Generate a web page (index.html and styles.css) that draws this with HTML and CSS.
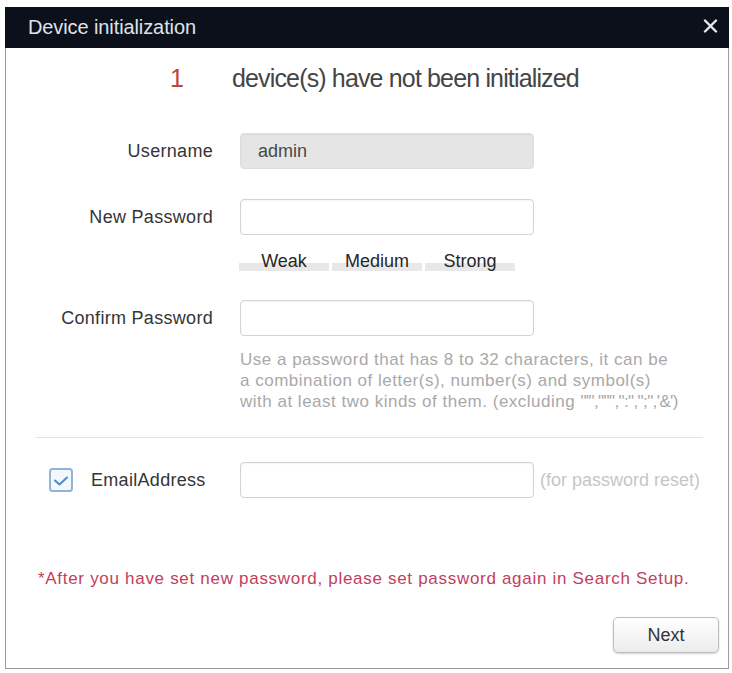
FILE: index.html
```html
<!DOCTYPE html>
<html lang="en">
<head>
<meta charset="utf-8">
<title>Device initialization</title>
<link rel="stylesheet" href="styles.css">
</head>
<body>
<div class="dialog">
  <div class="header">
    <span class="header-title">Device initialization</span>
    <span class="close" aria-label="Close">
      <svg width="15" height="14" viewBox="0 0 15 14"><path d="M2 1.5 L13 12.5 M13 1.5 L2 12.5" stroke="#e6e8ea" stroke-width="2.4" stroke-linecap="round" fill="none"/></svg>
    </span>
  </div>
  <div class="content">
    <div class="title"><span class="count">1</span>device(s) have not been initialized</div>

    <div class="row row-user">
      <label class="label">Username</label>
      <div class="input input-disabled">admin</div>
    </div>

    <div class="row row-newpw">
      <label class="label">New Password</label>
      <div class="input"></div>
    </div>

    <div class="strength">
      <div class="seg"><span class="seg-text">Weak</span><span class="seg-bar"></span></div>
      <div class="seg"><span class="seg-text">Medium</span><span class="seg-bar"></span></div>
      <div class="seg"><span class="seg-text">Strong</span><span class="seg-bar"></span></div>
    </div>

    <div class="row row-confirm">
      <label class="label">Confirm Password</label>
      <div class="input"></div>
    </div>

    <p class="hint">Use a password that has 8 to 32 characters, it can be<br>a combination of letter(s), number(s) and symbol(s)<br>with at least two kinds of them. (excluding <span class="chars">"'",""",":",";",'&amp;'</span>)</p>

    <div class="divider"></div>

    <div class="row row-email">
      <div class="label label-check">
        <span class="checkbox">
          <svg width="24" height="24" viewBox="0 0 24 24"><rect x="1" y="1" width="22" height="22" rx="2.5" fill="#f4f8fc" stroke="#93b3d4" stroke-width="2"/><path d="M6 12.5 L10.5 16.5 L18 9.5" stroke="#4d8bcc" stroke-width="2" fill="none" stroke-linecap="round" stroke-linejoin="round"/></svg>
        </span>
        <span>EmailAddress</span>
      </div>
      <div class="input"></div>
      <span class="reset-note">(for password reset)</span>
    </div>

    <p class="note">*After you have set new password, please set password again in Search Setup.</p>

    <div class="actions">
      <button class="btn" type="button">Next</button>
    </div>
  </div>
</div>
</body>
</html>
```
FILE: styles.css
```css
html, body {
  margin: 0;
  padding: 0;
  background: #ffffff;
}

body {
  font-family: "Liberation Sans", Arial, sans-serif;
  color: #333;
}

.dialog {
  box-sizing: border-box;
  margin: 7px 0 0 5px;
  width: 724px;
  height: 662px;
  border: 1px solid #9c9c9c;
  border-top: none;
  background: #fff;
  display: flex;
  flex-direction: column;
}

.header {
  height: 41px;
  margin: 0 -1px;
  background: #0c101b;
  display: flex;
  align-items: center;
  justify-content: space-between;
  padding: 0 11px 0 23px;
}

.header-title {
  color: #dfe3e8;
  font-size: 20px;
  letter-spacing: -0.1px;
}

.close {
  display: flex;
  width: 15px;
  height: 14px;
  margin-top: -3px;
}

.content {
  padding-top: 15px;
  display: flex;
  flex-direction: column;
}

.title {
  height: 30px;
  line-height: 30px;
  padding-left: 164px;
  font-size: 25px;
  letter-spacing: -0.85px;
  color: #454545;
}

.count {
  display: inline-block;
  width: 62px;
  color: #c0433c;
}

.row {
  display: flex;
  align-items: center;
  height: 36px;
}

.row-user { margin-top: 40px; }
.row-newpw { margin-top: 30px; }
.row-confirm { margin-top: 29px; }
.row-email { margin-top: 24px; }

.label {
  width: 207px;
  margin-right: 27px;
  text-align: right;
  font-size: 18px;
  letter-spacing: 0.3px;
  color: #353535;
}

.label-check {
  display: flex;
  align-items: center;
  box-sizing: border-box;
  padding-left: 43px;
  text-align: left;
}

.checkbox {
  display: flex;
  width: 24px;
  height: 24px;
  margin-right: 18px;
}

.input {
  box-sizing: border-box;
  width: 294px;
  height: 36px;
  border: 1px solid #d3d3d3;
  border-radius: 4px;
  background: #fff;
  box-shadow: inset 0 1px 2px rgba(0, 0, 0, 0.05);
}

.input-disabled {
  background: #e5e5e5;
  border-color: #dedede;
  font-size: 18px;
  line-height: 34px;
  padding-left: 17px;
  color: #484848;
}

.strength {
  display: flex;
  gap: 3px;
  margin-top: 16px;
  margin-left: 233px;
}

.seg {
  width: 90px;
  display: flex;
  flex-direction: column;
  align-items: center;
}

.seg-text {
  position: relative;
  z-index: 1;
  display: block;
  font-size: 18px;
  line-height: 20px;
  color: #262626;
}

.seg-bar {
  display: block;
  width: 100%;
  height: 8px;
  margin-top: -8px;
  background: #e8e8e8;
}

.hint {
  margin: 13px 0 0 234px;
  font-size: 17px;
  line-height: 21px;
  letter-spacing: 0.5px;
  color: #a9a9a9;
}

.chars {
  letter-spacing: -0.6px;
}

.divider {
  margin: 25px 0 0 30px;
  width: 667px;
  height: 1px;
  background: #e3e3e3;
}

.reset-note {
  margin-left: 6px;
  font-size: 18px;
  color: #c6c6c6;
}

.note {
  margin: 70px 0 0 32px;
  font-size: 17px;
  line-height: 22px;
  letter-spacing: 0.7px;
  color: #c2405c;
}

.actions {
  display: flex;
  justify-content: flex-end;
  margin-top: 27px;
  padding-right: 9px;
}

.btn {
  box-sizing: border-box;
  width: 106px;
  height: 36px;
  border: 1px solid #bdbdbd;
  border-radius: 5px;
  background: linear-gradient(#ffffff, #ececec);
  box-shadow: 0 1px 2px rgba(0, 0, 0, 0.18);
  font-family: "Liberation Sans", Arial, sans-serif;
  font-size: 18px;
  color: #333;
  padding: 0;
}
```
